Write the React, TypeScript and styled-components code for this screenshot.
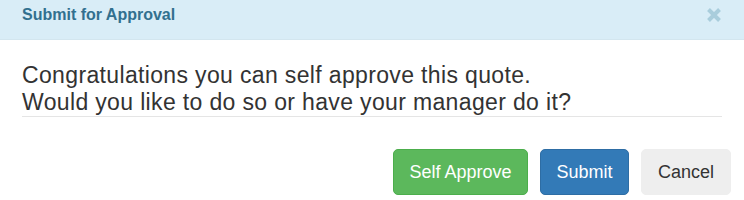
import React from "react";
import styled, { createGlobalStyle } from "styled-components";

const Global = createGlobalStyle`
  html, body { margin: 0; padding: 0; background: #fff; }
  body { font-family: "Liberation Sans", Arial, sans-serif; color: #333; }
`;

const Modal = styled.div`
  width: 744px;
  height: 200px;
  display: flex;
  flex-direction: column;
  background: #fff;
`;

const Header = styled.div`
  box-sizing: border-box;
  height: 40px;
  border-bottom: 1px solid #d3e6ef;
  background: #d9edf7;
  display: flex;
  align-items: flex-start;
  justify-content: space-between;
  padding: 5px 22px 0 22px;
`;

const Title = styled.h4`
  margin: 0;
  font-size: 16px;
  line-height: 20px;
  font-weight: bold;
  color: #31708f;
`;

const Close = styled.button`
  border: 0;
  background: none;
  padding: 0;
  margin-top: 2px;
  width: 16px;
  height: 16px;
  display: flex;
  cursor: pointer;
`;

const Body = styled.div`
  padding: 22px 22px 0;
`;

const Message = styled.div`
  display: flex;
  flex-direction: column;
  border-bottom: 1px solid #e5e5e5;
`;

const Line = styled.p`
  margin: 0;
  font-size: 23px;
  line-height: 27px;
  letter-spacing: 0.35px;
  color: #333;
`;

const Footer = styled.div`
  display: flex;
  justify-content: flex-end;
  gap: 12px;
  padding: 32px 13px 0 0;
`;

const Button = styled.button<{ $variant: "success" | "primary" | "default" }>`
  height: 46px;
  padding: 0;
  white-space: nowrap;
  border-radius: 5px;
  border: 1px solid
    ${(p) => (p.$variant === "success" ? "#4cae4c" : p.$variant === "primary" ? "#2e6da4" : "#eee")};
  background: ${(p) => (p.$variant === "success" ? "#5cb85c" : p.$variant === "primary" ? "#337ab7" : "#eeeeee")};
  color: ${(p) => (p.$variant === "default" ? "#333" : "#fff")};
  font-family: "Liberation Sans", Arial, sans-serif;
  font-size: 18px;
  cursor: pointer;
`;

export default function App() {
  return (
    <>
      <Global />
      <Modal>
        <Header>
          <Title>Submit for Approval</Title>
          <Close aria-label="Close">
            <svg width="16" height="16" viewBox="0 0 16 16">
              <path d="M2.5 2.5 L13.5 13.5 M13.5 2.5 L2.5 13.5" stroke="#a9cddc" strokeWidth="4" />
            </svg>
          </Close>
        </Header>
        <Body>
          <Message>
            <Line>Congratulations you can self approve this quote.</Line>
            <Line>Would you like to do so or have your manager do it?</Line>
          </Message>
        </Body>
        <Footer>
          <Button $variant="success" style={{ width: 135 }}>Self Approve</Button>
          <Button $variant="primary" style={{ width: 89 }}>Submit</Button>
          <Button $variant="default" style={{ width: 90 }}>Cancel</Button>
        </Footer>
      </Modal>
    </>
  );
}
